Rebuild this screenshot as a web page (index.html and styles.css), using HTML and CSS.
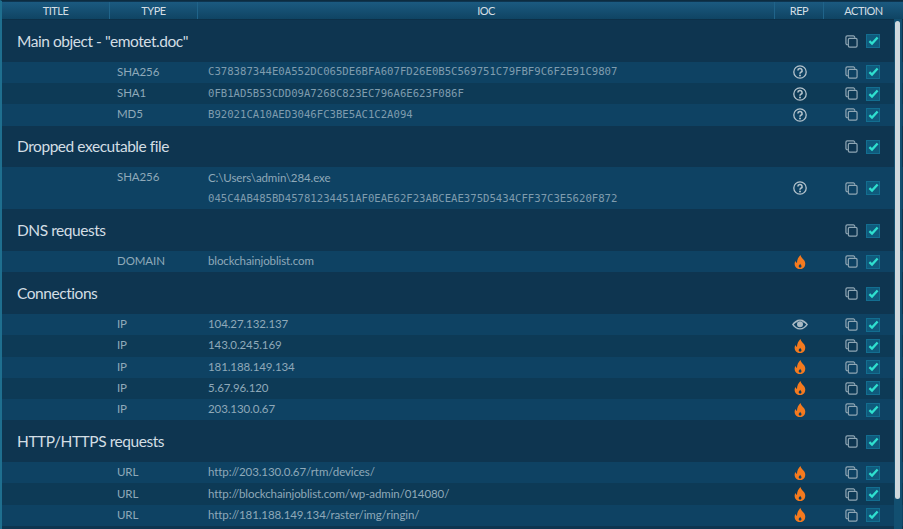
FILE: index.html
```html
<!DOCTYPE html>
<html lang="en">
<head>
<meta charset="utf-8">
<title>IOC</title>
<link rel="stylesheet" href="styles.css">
</head>
<body>
<svg class="defs" width="0" height="0" aria-hidden="true">
  <symbol id="copy" viewBox="0 0 14 14">
    <path d="M3 10.400H2.400A1.400 1.400 0 0 1 1 9V2.400A1.400 1.400 0 0 1 2.400 1H9a1.400 1.400 0 0 1 1.400 1.400V3" fill="none" stroke="#8fa6b4" stroke-width="1.300"/>
    <rect x="3.600" y="3.600" width="9.400" height="9.400" rx="1.400" fill="none" stroke="#8fa6b4" stroke-width="1.300"/>
  </symbol>
  <symbol id="check" viewBox="0 0 14 14">
    <rect x=".5" y=".5" width="13" height="13" fill="#0f5a7c" stroke="#136e90"/>
    <path d="M3.400 7.200 6 9.600 11.600 3.400" fill="none" stroke="#2fe0cf" stroke-width="2.300"/>
  </symbol>
  <symbol id="q" viewBox="0 0 14 14">
    <circle cx="7" cy="7" r="6.200" fill="none" stroke="#b4c3cc" stroke-width="1.300"/>
    <path d="M4.900 5.500A2.100 2 0 1 1 7.900 7.300C7.200 7.700 7 8 7 8.800" fill="none" stroke="#b4c3cc" stroke-width="1.600"/>
    <circle cx="7" cy="10.400" r="1" fill="#b4c3cc"/>
  </symbol>
  <symbol id="fire" viewBox="0 0 12 14">
    <path fill-rule="evenodd" d="M6.400 0C6.900 2.400 9 3.700 10.300 5.600 11.500 7.300 11.600 9.900 10.500 11.700 9.500 13.200 7.900 14 6 14 4.100 14 2.400 13.200 1.400 11.700.3 10 .4 7.700 1.500 6 1.800 6.900 2.300 7.500 3 7.900 2.900 5 4.400 2 6.400 0ZM6.200 8.800C5.700 9.700 4.700 10.300 4.700 11.300 4.700 12.100 5.300 12.700 6.100 12.700 6.900 12.700 7.500 12.100 7.500 11.300 7.500 10.300 6.600 9.700 6.200 8.800Z" fill="#f47a1f"/>
  </symbol>
  <symbol id="eye" viewBox="0 0 16 11">
    <path fill-rule="evenodd" d="M8 .5C4.600.5 1.800 2.600 0 5.500 1.800 8.400 4.600 10.500 8 10.500S14.200 8.400 16 5.500C14.200 2.600 11.400.5 8 .5ZM8 1.800C9.100 1.800 10 2.200 10.700 2.900 12 3.500 13 4.400 14.200 5.500 12.700 7.600 10.500 9.300 8 9.300S3.300 7.600 1.800 5.500C3 4.400 4 3.500 5.300 2.900 6 2.200 6.900 1.800 8 1.800Z" fill="#a9bac4"/>
    <circle cx="8" cy="5.300" r="3" fill="#a9bac4"/>
  </symbol>
</svg>
<main class="panel">
  <header class="row head">
    <div class="cell">TITLE</div><div class="cell">TYPE</div><div class="cell">IOC</div><div class="cell">REP</div><div class="cell">ACTION</div>
  </header>

  <section class="row sec sec-1"><h2 class="title">Main object - "emotet.doc"</h2><div class="act"><svg class="i-copy"><use href="#copy"/></svg><svg class="i-check"><use href="#check"/></svg></div></section>
  <div class="row item"><span class="type">SHA256</span><span class="ioc hash">C378387344E0A552DC065DE6BFA607FD26E0B5C569751C79FBF9C6F2E91C9807</span><span class="rep"><svg class="i-q"><use href="#q"/></svg></span><div class="act"><svg class="i-copy"><use href="#copy"/></svg><svg class="i-check"><use href="#check"/></svg></div></div>
  <div class="row item alt"><span class="type">SHA1</span><span class="ioc hash">0FB1AD5B53CDD09A7268C823EC796A6E623F086F</span><span class="rep"><svg class="i-q"><use href="#q"/></svg></span><div class="act"><svg class="i-copy"><use href="#copy"/></svg><svg class="i-check"><use href="#check"/></svg></div></div>
  <div class="row item"><span class="type">MD5</span><span class="ioc hash">B92021CA10AED3046FC3BE5AC1C2A094</span><span class="rep"><svg class="i-q"><use href="#q"/></svg></span><div class="act"><svg class="i-copy"><use href="#copy"/></svg><svg class="i-check"><use href="#check"/></svg></div></div>

  <section class="row sec"><h2 class="title">Dropped executable file</h2><div class="act"><svg class="i-copy"><use href="#copy"/></svg><svg class="i-check"><use href="#check"/></svg></div></section>
  <div class="row item tall"><span class="type">SHA256</span><span class="ioc stack"><span>C:\Users\admin\284.exe</span><span class="hash">045C4AB485BD45781234451AF0EAE62F23ABCEAE375D5434CFF37C3E5620F872</span></span><span class="rep"><svg class="i-q"><use href="#q"/></svg></span><div class="act"><svg class="i-copy"><use href="#copy"/></svg><svg class="i-check"><use href="#check"/></svg></div></div>

  <section class="row sec"><h2 class="title">DNS requests</h2><div class="act"><svg class="i-copy"><use href="#copy"/></svg><svg class="i-check"><use href="#check"/></svg></div></section>
  <div class="row item"><span class="type">DOMAIN</span><span class="ioc">blockchainjoblist.com</span><span class="rep"><svg class="i-fire"><use href="#fire"/></svg></span><div class="act"><svg class="i-copy"><use href="#copy"/></svg><svg class="i-check"><use href="#check"/></svg></div></div>

  <section class="row sec"><h2 class="title">Connections</h2><div class="act"><svg class="i-copy"><use href="#copy"/></svg><svg class="i-check"><use href="#check"/></svg></div></section>
  <div class="row item"><span class="type">IP</span><span class="ioc">104.27.132.137</span><span class="rep"><svg class="i-eye"><use href="#eye"/></svg></span><div class="act"><svg class="i-copy"><use href="#copy"/></svg><svg class="i-check"><use href="#check"/></svg></div></div>
  <div class="row item alt"><span class="type">IP</span><span class="ioc">143.0.245.169</span><span class="rep"><svg class="i-fire"><use href="#fire"/></svg></span><div class="act"><svg class="i-copy"><use href="#copy"/></svg><svg class="i-check"><use href="#check"/></svg></div></div>
  <div class="row item"><span class="type">IP</span><span class="ioc">181.188.149.134</span><span class="rep"><svg class="i-fire"><use href="#fire"/></svg></span><div class="act"><svg class="i-copy"><use href="#copy"/></svg><svg class="i-check"><use href="#check"/></svg></div></div>
  <div class="row item alt"><span class="type">IP</span><span class="ioc">5.67.96.120</span><span class="rep"><svg class="i-fire"><use href="#fire"/></svg></span><div class="act"><svg class="i-copy"><use href="#copy"/></svg><svg class="i-check"><use href="#check"/></svg></div></div>
  <div class="row item"><span class="type">IP</span><span class="ioc">203.130.0.67</span><span class="rep"><svg class="i-fire"><use href="#fire"/></svg></span><div class="act"><svg class="i-copy"><use href="#copy"/></svg><svg class="i-check"><use href="#check"/></svg></div></div>

  <section class="row sec"><h2 class="title">HTTP/HTTPS requests</h2><div class="act"><svg class="i-copy"><use href="#copy"/></svg><svg class="i-check"><use href="#check"/></svg></div></section>
  <div class="row item"><span class="type">URL</span><span class="ioc">http://203.130.0.67/rtm/devices/</span><span class="rep"><svg class="i-fire"><use href="#fire"/></svg></span><div class="act"><svg class="i-copy"><use href="#copy"/></svg><svg class="i-check"><use href="#check"/></svg></div></div>
  <div class="row item alt"><span class="type">URL</span><span class="ioc">http://blockchainjoblist.com/wp-admin/014080/</span><span class="rep"><svg class="i-fire"><use href="#fire"/></svg></span><div class="act"><svg class="i-copy"><use href="#copy"/></svg><svg class="i-check"><use href="#check"/></svg></div></div>
  <div class="row item"><span class="type">URL</span><span class="ioc">http://181.188.149.134/raster/img/ringin/</span><span class="rep"><svg class="i-fire"><use href="#fire"/></svg></span><div class="act"><svg class="i-copy"><use href="#copy"/></svg><svg class="i-check"><use href="#check"/></svg></div></div>

  <div class="scroll"><div class="thumb"></div></div>
</main>
</body>
</html>
```
FILE: styles.css
```css
* { box-sizing: border-box; }
html, body { margin: 0; height: 100%; overflow: hidden; background: #0e3550; }
.defs { position: absolute; }
.panel {
  position: relative;
  width: 903px;
  height: 529px;
  overflow: hidden;
  padding-top: 2px;
  background: #0e3550;
  border-top: 1px solid #0d2c40;
  border-left: 2px solid #1f6f8f;
  font-family: "Lato", "Noto Sans", sans-serif;
  color: #8fa9b9;
}
.row {
  display: grid;
  grid-template-columns: 108px 88px 577px 49px 79px;
  align-items: center;
}
.head {
  height: 18px;
  margin-top: -1px;
  background: linear-gradient(#1b5a80, #0f4463);
  border-bottom: 1px solid #0c3048;
  color: #d3dee4;
  font-size: 11px;
  letter-spacing: -0.5px;
}
.cell {
  height: 100%;
  display: flex;
  align-items: center;
  justify-content: center;
  border-right: 1px solid #20648a;
}
.cell:last-child { border-right: 0; }
.sec { height: 41.7px; background: #0e3550; }
.sec .act { padding-top: 1px; }
.title {
  grid-column: 1 / 5;
  margin: 0 0 0 15px;
  font-size: 15.5px;
  font-weight: 400;
  letter-spacing: -0.45px;
  color: #d3dee4;
}
.item { height: 21.3px; background: #0e4263; font-size: 11.5px; letter-spacing: -0.1px; }
.item.alt { background: #0d3a56; }
.item.tall { height: 42px; }
.type { grid-column: 2; padding: 0 0 2px 7px; }
.ioc { grid-column: 3; padding: 0 0 2px 10px; }
.ioc.hash { padding-bottom: 1px; }
.tall .type { align-self: start; padding-top: 3px; }
.stack { display: flex; flex-direction: column; gap: 8px; padding-bottom: 0; }
.hash { font-family: "DejaVu Sans Mono", monospace; font-size: 10.63px; letter-spacing: 0; color: #7f9cae; }
.rep { grid-column: 4; display: flex; justify-content: center; }
.act { grid-column: 5; display: flex; align-items: center; gap: 8px; padding-left: 21px; }
.i-copy { width: 13px; height: 13px; }
.i-check { width: 14px; height: 14px; }
.i-q { width: 14px; height: 14px; }
.i-fire { width: 12px; height: 14px; }
.i-eye { width: 16px; height: 11px; }
.scroll {
  position: absolute;
  top: 18px;
  right: 1px;
  bottom: 0;
  width: 8px;
  background: #124f70;
}
.thumb {
  width: 5px;
  height: 478px;
  margin: 2px 0 0 1px;
  background: #cfd8dd;
  border-radius: 3px;
}
```
